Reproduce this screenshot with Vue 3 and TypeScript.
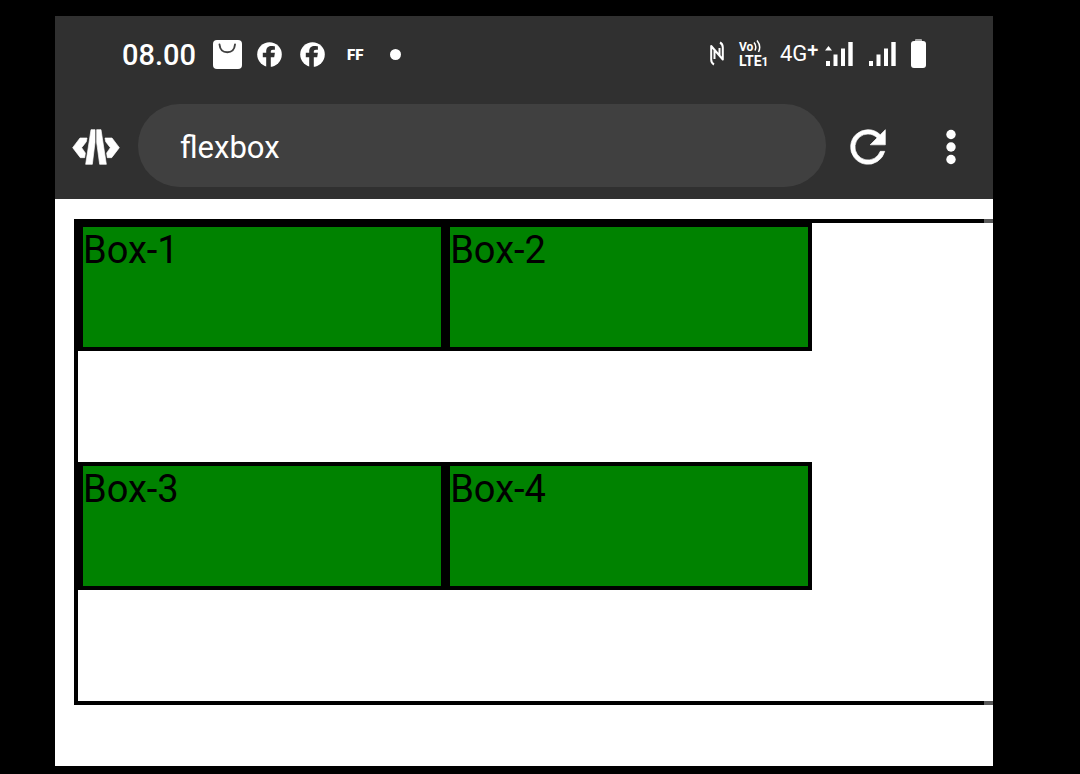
<script setup lang="ts">
import { ref } from 'vue'

const address = ref('flexbox')
const boxes: string[] = ['Box-1', 'Box-2', 'Box-3', 'Box-4']
</script>

<template>
  <div class="phone">
    <header class="chrome">
      <div class="status">
        <span class="time">08.00</span>
        <svg class="bag" width="29" height="29" viewBox="0 0 29 29" aria-hidden="true">
          <rect width="29" height="29" rx="4" fill="#fff" />
          <path d="M6.500 4.500C7 9.500 10 12.300 14.300 12.300S21.500 9.500 22 4.500" fill="none" stroke="#404040" stroke-width="1.900" stroke-linecap="round" />
        </svg>
        <svg v-for="n in 2" :key="n" class="social" width="25" height="25" viewBox="0 0 25 25" aria-hidden="true">
          <circle cx="12.500" cy="12.500" r="12.300" fill="#fff" />
          <path d="M9.200 25V15.200H5.800V10.800H9.200V9.400C9.200 5.600 11.400 3.900 14.700 3.900C16.500 3.900 17.900 4.200 17.900 4.200V7.700H16C14.200 7.700 13.800 8.600 13.800 9.600V10.800H17.900L17.200 15.200H13.800V25Z" fill="#303030" />
        </svg>
        <span class="ff">FF</span>
        <span class="dot"></span>
        <div class="radio">
          <svg width="17" height="26" viewBox="0 0 17 26" aria-hidden="true">
            <path d="M5 23.500Q2.200 22 2.200 18.500V5L13.800 18.500V6.500Q13.800 3 11 1.500M5.500 18V9M10.500 15V7" fill="none" stroke="#fff" stroke-width="2" stroke-linejoin="round" />
          </svg>
          <div class="volte">
            <span class="vo">Vo<svg width="9" height="13" viewBox="0 0 9 13" aria-hidden="true">
              <path d="M1 2.500Q4 6 2 10.500M4 0.500Q8.500 6 5.500 12" fill="none" stroke="#fff" stroke-width="1.500" />
            </svg></span>
            <span class="lte">LTE<small>1</small></span>
          </div>
          <span class="net">4G<b>+</b></span>
          <svg class="signal" width="28" height="26" viewBox="0 0 28 26" aria-hidden="true">
            <path d="M1 20H5V25H1ZM8.500 13.500H12.500V25H8.500ZM16 7.500H20V25H16ZM23.300 1H27.700V25H23.300ZM0 9.500L3.500 5L7 9.500Z" fill="#fff" />
          </svg>
          <svg class="signal" width="28" height="26" viewBox="0 0 28 26" aria-hidden="true">
            <path d="M1 20H5V25H1ZM8.500 13.500H12.500V25H8.500ZM16 7.500H20V25H16ZM23.300 1H27.700V25H23.300Z" fill="#fff" />
          </svg>
          <svg width="15" height="30" viewBox="0 0 15 30" aria-hidden="true">
            <rect x="4" width="7" height="4" rx="1" fill="#aaa" />
            <rect y="2" width="15" height="27" rx="3" fill="#fff" />
          </svg>
        </div>
      </div>
      <div class="toolbar">
        <button class="icon code" type="button" aria-label="Editor">
          <svg width="48" height="36" viewBox="53 100 144 108" aria-hidden="true">
            <g fill="#fff" stroke="#fff" stroke-width="2" stroke-linejoin="round">
              <path d="M55 156L77 127H98L96 138L82 156L93 172L91 186H78Z" />
              <path d="M195 156L173 127H152L154 138L168 156L157 172L159 186H172Z" />
              <path d="M110 102H122V140L114 206H94Z" />
              <path d="M127 102H140L156 206H136L127 140Z" />
            </g>
          </svg>
        </button>
        <input v-model="address" class="address" type="text" aria-label="Address" />
        <button class="icon" type="button" aria-label="Reload">
          <svg width="52" height="52" viewBox="0 0 24 24" aria-hidden="true">
            <path d="M17.650 6.350A7.960 7.960 0 0 0 12 4a8 8 0 1 0 7.730 10h-2.080A6 6 0 1 1 12 6c1.660 0 3.140.69 4.220 1.780L13 11h7V4z" fill="#fff" stroke="#fff" stroke-width="0.300" />
          </svg>
        </button>
        <button class="icon more" type="button" aria-label="More options">
          <svg width="52" height="52" viewBox="0 0 52 52" aria-hidden="true">
            <g fill="#fff">
              <circle cx="26" cy="13.500" r="4.700" />
              <circle cx="26" cy="26" r="4.700" />
              <circle cx="26" cy="38.500" r="4.700" />
            </g>
          </svg>
        </button>
      </div>
    </header>
    <main class="page">
      <div class="container">
        <div v-for="box in boxes" :key="box" class="box">{{ box }}</div>
      </div>
      <div class="scrolltrack"></div>
    </main>
  </div>
</template>

<style>
html,
body {
  background: #000;
}
body {
  margin: 0;
}
</style>

<style scoped>
.phone {
  margin: 16px 87px 8px 55px;
  font-family: Roboto, "Liberation Sans", sans-serif;
  background: #fff;
}
.chrome {
  background: #303030;
  color: #fff;
}
.status {
  display: flex;
  align-items: center;
  height: 76px;
  padding: 0 67px;
}
.status svg {
  display: block;
  flex: none;
}
.time {
  padding-top: 2px;
  font-size: 29px;
  line-height: 36px;
  font-weight: 500;
  margin-right: 17px;
}
.bag {
  margin-right: 15px;
}
.social {
  margin-right: 18px;
}
.ff {
  margin-left: 4px;
  padding-top: 2px;
  font-size: 15px;
  line-height: 16px;
  font-weight: 900;
}
.dot {
  width: 11px;
  height: 11px;
  margin-left: 27px;
  border-radius: 50%;
  background: #fff;
}
.radio {
  display: flex;
  align-items: center;
  margin-left: auto;
}
.volte {
  display: flex;
  flex-direction: column;
  width: 31px;
  margin: 0 10px 0 13px;
  font-weight: 700;
}
.vo {
  display: flex;
  font-size: 12px;
  line-height: 14px;
}
.lte {
  font-size: 14px;
  line-height: 14px;
  white-space: nowrap;
}
.lte small {
  font-size: 12px;
}
.net {
  display: flex;
  width: 38px;
  margin-right: 7px;
  font-size: 22px;
  line-height: 28px;
}
.net b {
  font-size: 20px;
  line-height: 20px;
  font-weight: 500;
}
.signal {
  margin-right: 15px;
}
.toolbar {
  display: flex;
  align-items: center;
  padding: 12px 16px 12px 17px;
}
.icon {
  flex: none;
  padding: 2px 0 0;
  border: 0;
  background: none;
}
.icon svg {
  display: block;
}
.address {
  flex: 1;
  min-width: 0;
  box-sizing: border-box;
  height: 83px;
  margin: 0 16px 0 18px;
  padding: 4px 42px 0;
  border: 0;
  border-radius: 42px;
  outline: 0;
  background: #404040;
  color: #fff;
  font: 31px Roboto, "Liberation Sans", sans-serif;
}
.more {
  margin-left: 31px;
}
.page {
  position: relative;
  overflow: hidden;
  padding: 20px 0 61px 19px;
}
.container {
  display: flex;
  flex-wrap: wrap;
  align-items: flex-start;
  row-gap: 111px;
  margin-right: -3px;
  padding-bottom: 111px;
  border: 4px solid #000;
  border-right: 0;
}
.box {
  box-sizing: border-box;
  flex: 0 0 40%;
  height: 128px;
  border: 4px solid #000;
  border-left-width: 5px;
  background: #008200;
  color: #000;
  font-size: 38px;
  line-height: 47px;
}
.box:nth-child(even) {
  margin-right: 20%;
}
.scrolltrack {
  position: absolute;
  top: 0;
  right: 0;
  bottom: 0;
  width: 9px;
  background: rgba(255, 255, 255, 0.35);
}
</style>
